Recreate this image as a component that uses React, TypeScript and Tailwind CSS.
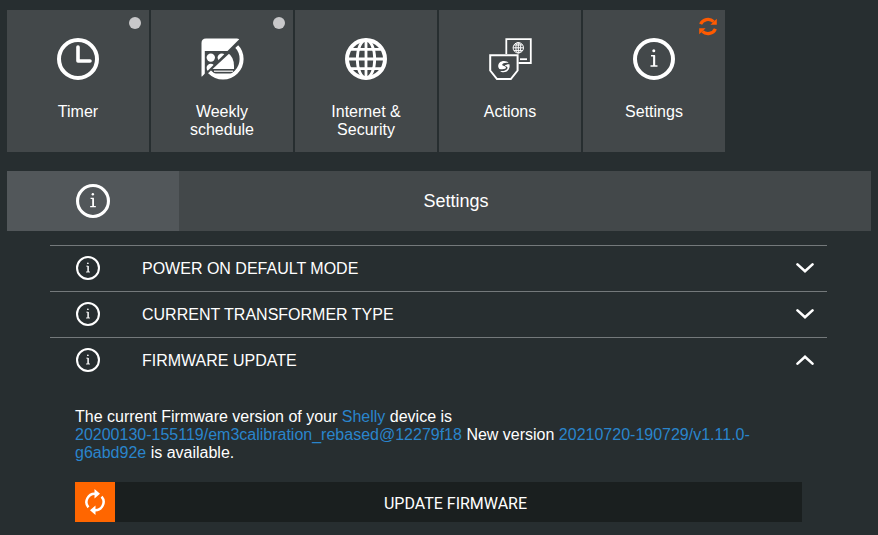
import { useState, type ReactNode } from "react";

function InfoIcon({ className, ring }: { className: string; ring: number }) {
  return (
    <svg viewBox="0 0 42 42" className={className} fill="none" aria-hidden="true">
      <circle cx="21" cy="21" r={21 - ring / 2} stroke="#fff" strokeWidth={ring} />
      <circle cx="20.8" cy="12.7" r="1.5" fill="#fff" />
      <path d="M18 17.8h3.2V28M17.5 28h7" stroke="#fff" strokeWidth="1.5" />
      <path d="M21.2 17.5V28" stroke="#fff" strokeWidth="2" />
    </svg>
  );
}

function ClockIcon() {
  return (
    <svg viewBox="0 0 42 42" className="size-[42px]" fill="none" stroke="#fff" strokeWidth="4" aria-hidden="true">
      <circle cx="21" cy="21" r="19" />
      <path d="M21 9v14h12" strokeWidth="3.6" strokeLinecap="round" strokeLinejoin="round" />
    </svg>
  );
}

function ScheduleIcon() {
  return (
    <svg viewBox="0 0 43 42" className="h-[42px] w-[43px]" aria-hidden="true">
      <defs>
        <clipPath id="calendar-half">
          <path d="M0 0H39.5L1 38.5H0z" />
        </clipPath>
        <clipPath id="clock-half">
          <path d="M43 2V42H4V38L38.5 6z" />
        </clipPath>
      </defs>
      <g clipPath="url(#calendar-half)">
        <path
          fillRule="evenodd"
          fill="#fff"
          d="M5 .5H36Q38.5 .5 38.5 2V42H.5V5Q.5 .5 5 .5zM3.8 13V42H34V13z"
        />
        <circle cx="9.8" cy="19.6" r="4.2" fill="#fff" />
        <circle cx="20.8" cy="19.6" r="4.2" fill="#fff" />
        <circle cx="9.8" cy="30" r="4.2" fill="#fff" />
      </g>
      <g clipPath="url(#clock-half)">
        <circle cx="22" cy="21" r="18.6" fill="none" stroke="#fff" strokeWidth="4" />
        <path d="M27 15Q33 19 33 28V31H10z" fill="#fff" />
      </g>
      <path d="M13 33.2H32" stroke="#fff" strokeWidth="1.2" />
      <path d="M12 35.5H32L27 38.5H16z" fill="#fff" />
    </svg>
  );
}

function GlobeIcon() {
  return (
    <svg viewBox="0 0 42 42" className="size-[42px]" fill="none" stroke="#fff" strokeWidth="2.8" aria-hidden="true">
      <circle cx="21" cy="21" r="19" strokeWidth="4" />
      <ellipse cx="21" cy="21" rx="8.7" ry="19" />
      <path d="M21 2v38M2 21h38M4 11.3h34M4 30.7h34" />
    </svg>
  );
}

function ActionsIcon() {
  return (
    <svg viewBox="0 0 43 42" className="h-[42px] w-[43px]" fill="none" stroke="#fff" strokeWidth="1.8" aria-hidden="true">
      <path d="M17.3 16V1.2H41.8V25H29.5" />
      <g strokeWidth="1">
        <circle cx="29.3" cy="9.8" r="5.2" />
        <ellipse cx="29.3" cy="9.8" rx="2.4" ry="5.2" />
        <path d="M29.3 4.6v10.4M24.1 9.8h10.4M25 7h8.6M25 12.6h8.6" />
      </g>
      <path d="M31 21.2h7" />
      <path d="M1.2 17.2H28.6V32.5L21.8 41H8L1.2 32.5z" strokeWidth="2" />
      <g fill="#fff" stroke="none">
        <path d="M9.2 28.5C9 25.2 11.6 23 15 23c2 0 3.6.7 4.6 1.8-3-.5-6.4.2-6.4 2 0 1.5 3.8 1 3.8 2.8 0 1.3-2.5 1.9-6.6 1.3-.7-.7-1.1-1.5-1.2-2.4z" />
        <path d="M20.4 26.3c1 3.8-1.4 8-5.8 8-1.6 0-2.6-.5-3.5-1.3 3.4.2 7.4-.8 7.4-3.3 0-1.3-1.7-1.5-2.7-2 .8-1 3-1.6 4.6-1.4z" />
      </g>
    </svg>
  );
}

function SyncBadge() {
  return (
    <svg viewBox="0 0 18 19" className="h-[19px] w-[18px]" fill="none" aria-label="Update available" role="img">
      <path d="M1.6 7.2A8 7.6 0 0 1 14.6 4.6" stroke="#ff5a00" strokeWidth="3.2" />
      <path d="M16.4 11.8A8 7.6 0 0 1 3.4 14.4" stroke="#ff5a00" strokeWidth="3.2" />
      <path d="M17.8 1.8V7.8H11.4z M.2 17.2V11.2H6.6z" fill="#ff5a00" />
    </svg>
  );
}

function RenewIcon() {
  return (
    <svg viewBox="0 0 20 26" className="h-[26px] w-5" fill="none" aria-hidden="true">
      <path d="M3.4 18.4A8.3 8.3 0 0 1 10.5 4.8" stroke="#fff" strokeWidth="2.5" />
      <path d="M16.6 7.6A8.3 8.3 0 0 1 9.5 21.2" stroke="#fff" strokeWidth="2.5" />
      <path d="M9.5 0L15 4.8L9.5 9.6z M10.5 16.4L5 21.2L10.5 26z" fill="#fff" />
    </svg>
  );
}

function Chevron({ open }: { open: boolean }) {
  return (
    <svg
      viewBox="0 0 18 10"
      className="h-2.5 w-[18px]"
      fill="none"
      stroke="#fff"
      strokeWidth="2.6"
      strokeLinecap="round"
      aria-hidden="true"
    >
      <path d={open ? "M1.5 8.6L9 1.8L16.5 8.6" : "M1.5 1.4L9 8.2L16.5 1.4"} />
    </svg>
  );
}

function Dot() {
  return <span className="block size-3 rounded-full bg-[#c8c8ca]" />;
}

const tiles: { label: string; icon: ReactNode; badge?: ReactNode }[] = [
  { label: "Timer", icon: <ClockIcon />, badge: <Dot /> },
  { label: "Weekly schedule", icon: <ScheduleIcon />, badge: <Dot /> },
  { label: "Internet & Security", icon: <GlobeIcon /> },
  { label: "Actions", icon: <ActionsIcon /> },
  { label: "Settings", icon: <InfoIcon className="size-[42px]" ring={4} />, badge: <SyncBadge /> },
];

function Section({
  title,
  open,
  onToggle,
  children,
}: {
  title: string;
  open: boolean;
  onToggle: () => void;
  children?: ReactNode;
}) {
  return (
    <section className="border-t border-[#74797b] pb-px">
      <button
        type="button"
        aria-expanded={open}
        onClick={onToggle}
        className="flex h-11 w-full items-center pr-[13px] pl-[26px] text-left"
      >
        <InfoIcon className="size-6" ring={3.6} />
        <span className="ml-[42px] flex-1 pt-0.5">{title}</span>
        <Chevron open={open} />
      </button>
      {open && children}
    </section>
  );
}

export default function App() {
  const [open, setOpen] = useState("firmware");
  const toggle = (id: string) => setOpen(open === id ? "" : id);

  return (
    <main className="min-h-screen bg-[#272e30] px-[7px] pt-2.5 font-['Liberation_Sans',Arial,sans-serif] text-[16px] leading-[18px] text-white">
      <nav className="flex flex-wrap gap-0.5">
        {tiles.map((tile) => (
          <button
            key={tile.label}
            type="button"
            className="relative flex h-[142px] w-[142px] flex-col items-center gap-[23px] bg-[#43484a] px-8 pt-7"
          >
            {tile.icon}
            <span>{tile.label}</span>
            {tile.badge && <span className="absolute top-[7px] right-2">{tile.badge}</span>}
          </button>
        ))}
      </nav>

      <header className="mt-[19px] flex h-[60px] bg-[#43484a]">
        <div className="flex w-[172px] items-center justify-center bg-[#52575a]">
          <InfoIcon className="size-[34px]" ring={3.8} />
        </div>
        <h1 className="flex flex-1 items-center justify-center pr-[138px] text-[18px]">Settings</h1>
      </header>

      <div className="mt-3.5 mr-11 ml-[43px]">
        <Section title="POWER ON DEFAULT MODE" open={open === "power"} onToggle={() => toggle("power")} />
        <Section title="CURRENT TRANSFORMER TYPE" open={open === "transformer"} onToggle={() => toggle("transformer")} />
        <Section title="FIRMWARE UPDATE" open={open === "firmware"} onToggle={() => toggle("firmware")}>
          <div className="px-[25px] pt-[26px]">
            <p>
              The current Firmware version of your <span className="text-[#2a85cc]">Shelly</span> device is{" "}
              <span className="inline-block max-w-full break-words text-[#2a85cc]">
                20200130-155119/em3calibration_rebased@12279f18
              </span>{" "}
              New version <span className="text-[#2a85cc]">20210720-190729/v1.11.0-g6abd92e</span> is available.
            </p>
            <button type="button" className="mt-5 flex h-10 w-full items-center bg-[#1a1f1f]">
              <span className="flex size-10 items-center justify-center bg-[#ff6600]">
                <RenewIcon />
              </span>
              <span className="flex-1 pt-1 pr-1.5 font-['Roboto',sans-serif]">UPDATE FIRMWARE</span>
            </button>
          </div>
        </Section>
      </div>
    </main>
  );
}
